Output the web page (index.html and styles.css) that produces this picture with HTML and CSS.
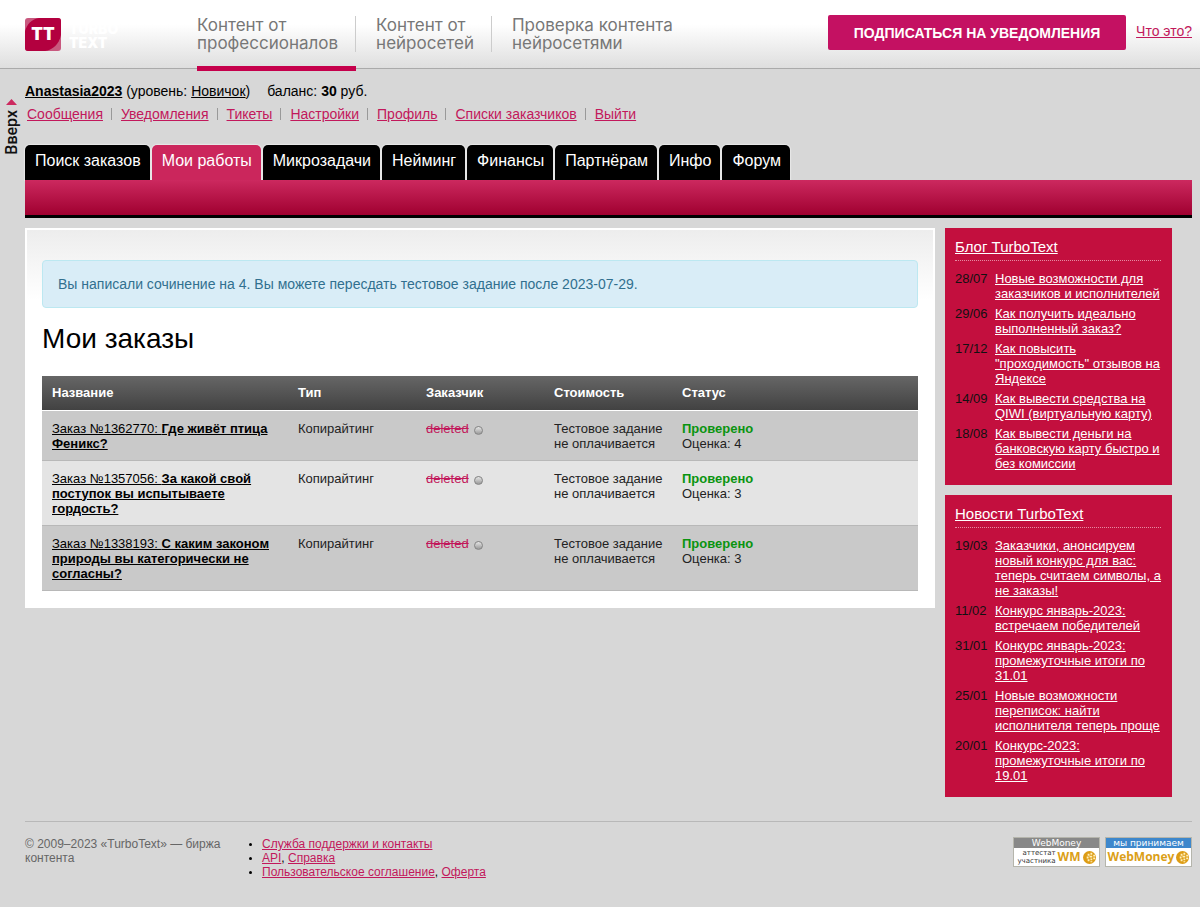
FILE: index.html
```html
<!DOCTYPE html>
<html lang="ru">
<head>
<meta charset="utf-8">
<meta name="viewport" content="width=device-width, initial-scale=1">
<title>Мои заказы — TurboText</title>
<link rel="stylesheet" href="styles.css">
</head>
<body>
<header class="top">
  <a class="logo" href="#" aria-label="TurboText">
    <span class="logo-mark">
      <svg class="logo-bg" viewBox="0 0 36 33" aria-hidden="true">
        <rect width="36" height="33" rx="3" fill="#c8597f"/>
        <path d="M0 13C2 6 7 1 14 0H33Q36 0 36 3V17C34 26 28 32 20 33H3Q0 33 0 30Z" fill="#b3003f"/>
      </svg>
      <span class="logo-tt">TT</span>
    </span>
    <span class="logo-name"><span>TURBO</span><span>TEXT</span></span>
  </a>
  <nav class="services">
    <a class="service service-active" href="#"><span>Контент от<br>профессионалов</span></a>
    <a class="service" href="#"><span>Контент от<br>нейросетей</span></a>
    <a class="service" href="#"><span>Проверка контента<br>нейросетями</span></a>
  </nav>
  <div class="subscribe">
    <button class="subscribe-button" type="button">ПОДПИСАТЬСЯ НА УВЕДОМЛЕНИЯ</button>
    <a class="link" href="#">Что это?</a>
  </div>
</header>

<div class="page">
  <a class="up" href="#"><svg width="11" height="6" viewBox="0 0 11 6" aria-hidden="true"><path d="M5.5 0L11 6H0Z" fill="#cc295f"/></svg><span>Вверх</span></a>
  <div class="body">
    <div class="account"><a class="user" href="#">Anastasia2023</a> (уровень: <a href="#">Новичок</a>)<span class="balance">баланс: <b>30</b> руб.</span></div>
    <ul class="usermenu">
      <li><a class="link" href="#">Сообщения</a></li>
      <li><a class="link" href="#">Уведомления</a></li>
      <li><a class="link" href="#">Тикеты</a></li>
      <li><a class="link" href="#">Настройки</a></li>
      <li><a class="link" href="#">Профиль</a></li>
      <li><a class="link" href="#">Списки заказчиков</a></li>
      <li><a class="link" href="#">Выйти</a></li>
    </ul>
    <nav class="tabs">
      <a href="#">Поиск заказов</a>
      <a class="tab-active" href="#">Мои работы</a>
      <a href="#">Микрозадачи</a>
      <a href="#">Нейминг</a>
      <a href="#">Финансы</a>
      <a href="#">Партнёрам</a>
      <a href="#">Инфо</a>
      <a href="#">Форум</a>
    </nav>
    <div class="bar"></div>

    <div class="columns">
      <main class="panel">
        <div class="notice">Вы написали сочинение на 4. Вы можете пересдать тестовое задание после 2023-07-29.</div>
        <h1>Мои заказы</h1>
        <table class="orders">
          <colgroup><col class="col-name"><col class="col-mid"><col class="col-mid"><col class="col-mid"><col></colgroup>
          <thead>
            <tr><th>Название</th><th>Тип</th><th>Заказчик</th><th>Стоимость</th><th>Статус</th></tr>
          </thead>
          <tbody>
            <tr>
              <td><a href="#">Заказ №1362770: <b>Где живёт птица Феникс?</b></a></td>
              <td>Копирайтинг</td>
              <td><del>deleted</del><span class="dot"></span></td>
              <td>Тестовое задание не оплачивается</td>
              <td><b class="ok">Проверено</b><br>Оценка: 4</td>
            </tr>
            <tr>
              <td><a href="#">Заказ №1357056: <b>За какой свой поступок вы испытываете гордость?</b></a></td>
              <td>Копирайтинг</td>
              <td><del>deleted</del><span class="dot"></span></td>
              <td>Тестовое задание не оплачивается</td>
              <td><b class="ok">Проверено</b><br>Оценка: 3</td>
            </tr>
            <tr>
              <td><a href="#">Заказ №1338193: <b>С каким законом природы вы категорически не согласны?</b></a></td>
              <td>Копирайтинг</td>
              <td><del>deleted</del><span class="dot"></span></td>
              <td>Тестовое задание не оплачивается</td>
              <td><b class="ok">Проверено</b><br>Оценка: 3</td>
            </tr>
          </tbody>
        </table>
      </main>

      <aside class="side">
        <section class="feed">
          <h2><a href="#">Блог TurboText</a></h2>
          <ul>
            <li><time>28/07</time><a href="#">Новые возможности для заказчиков и исполнителей</a></li>
            <li><time>29/06</time><a href="#">Как получить идеально выполненный заказ?</a></li>
            <li><time>17/12</time><a href="#">Как повысить "проходимость" отзывов на Яндексе</a></li>
            <li><time>14/09</time><a href="#">Как вывести средства на QIWI (виртуальную карту)</a></li>
            <li><time>18/08</time><a href="#">Как вывести деньги на банковскую карту быстро и без комиссии</a></li>
          </ul>
        </section>
        <section class="feed">
          <h2><a href="#">Новости TurboText</a></h2>
          <ul>
            <li><time>19/03</time><a href="#">Заказчики, анонсируем новый конкурс для вас: теперь считаем символы, а не заказы!</a></li>
            <li><time>11/02</time><a href="#">Конкурс январь-2023: встречаем победителей</a></li>
            <li><time>31/01</time><a href="#">Конкурс январь-2023: промежуточные итоги по 31.01</a></li>
            <li><time>25/01</time><a href="#">Новые возможности переписок: найти исполнителя теперь проще</a></li>
            <li><time>20/01</time><a href="#">Конкурс-2023: промежуточные итоги по 19.01</a></li>
          </ul>
        </section>
      </aside>
    </div>

    <footer class="footer">
      <div class="copyright">© 2009–2023 «TurboText» — биржа контента</div>
      <ul class="footer-links">
        <li><a class="link" href="#">Служба поддержки и контакты</a></li>
        <li><a class="link" href="#">API</a>, <a class="link" href="#">Справка</a></li>
        <li><a class="link" href="#">Пользовательское соглашение</a>, <a class="link" href="#">Оферта</a></li>
      </ul>
      <div class="badges">
        <a class="badge" href="#">
          <span class="badge-head">WebMoney</span>
          <span class="badge-body"><span class="badge-note">аттестат<br>участника</span><span class="badge-wm">WM</span>
            <svg class="globe" viewBox="0 0 14 14" aria-hidden="true"><circle cx="7" cy="7" r="7" fill="#dd9c14"/><path d="M5 3h2v2H5zM8 2h2v2H8zM11 4h2v2h-2zM4 6h2v2H4zM7 5h3v2H7zM11 7h2v2h-2zM5 9h2v2H5zM8 8h2v2H8zM8 11h2v1H8z" fill="#fff0bd"/></svg>
          </span>
        </a>
        <a class="badge badge-blue" href="#">
          <span class="badge-head">мы принимаем</span>
          <span class="badge-body"><span class="badge-wm">WebMoney</span>
            <svg class="globe" viewBox="0 0 14 14" aria-hidden="true"><circle cx="7" cy="7" r="7" fill="#dd9c14"/><path d="M5 3h2v2H5zM8 2h2v2H8zM11 4h2v2h-2zM4 6h2v2H4zM7 5h3v2H7zM11 7h2v2h-2zM5 9h2v2H5zM8 8h2v2H8zM8 11h2v1H8z" fill="#fff0bd"/></svg>
          </span>
        </a>
      </div>
    </footer>
  </div>
</div>
</body>
</html>
```
FILE: styles.css
```css
* { box-sizing: border-box; }
body {
  margin: 0;
  background: #d7d7d7;
  color: #000;
  font-family: "Liberation Sans", Arial, sans-serif;
  font-size: 14px;
  line-height: 16px;
}
ul { list-style: none; margin: 0; padding: 0; }
a { color: inherit; }
.link { color: #c2185b; }

.top {
  display: flex;
  height: 69px;
  padding: 0 8px 0 25px;
  background: linear-gradient(#fff 36%, #dedede);
  border-bottom: 1px solid #aaa;
}
.logo {
  display: flex;
  gap: 8px;
  width: 172px;
  padding-top: 18px;
  text-decoration: none;
  color: #fff;
  font-family: Inter, sans-serif;
  font-weight: 900;
}
.logo-mark { display: grid; width: 36px; height: 33px; }
.logo-bg { grid-area: 1 / 1; width: 36px; height: 33px; }
.logo-tt { grid-area: 1 / 1; place-self: center; z-index: 1; font-size: 17px; line-height: 33px; }
.logo-name { display: flex; flex-direction: column; padding-top: 4px; font-size: 14px; line-height: 14px; }

.services { display: flex; }
.service {
  display: flex;
  height: 71px;
  padding: 16px 0 0 20px;
  color: #777;
  font-family: Inter, sans-serif;
  font-size: 17px;
  line-height: 18px;
  text-decoration: none;
}
.service span { height: 36px; padding-right: 17px; border-right: 1px solid #ccc; }
.service:last-child span { border-right: 0; }
.service-active { padding-left: 0; border-bottom: 5px solid #c5004b; }

.subscribe { display: flex; gap: 10px; margin-left: auto; padding-top: 15px; }
.subscribe-button {
  width: 298px;
  height: 35px;
  padding: 0;
  border: 0;
  border-radius: 2px;
  background: #c41162;
  color: #fff;
  font-family: inherit;
  font-size: 14px;
  font-weight: bold;
}
.subscribe .link { padding-top: 8px; }

.page { display: grid; grid-template-columns: 25px minmax(0, 1fr); padding-right: 8px; }
.up {
  display: flex;
  flex-direction: column;
  align-items: center;
  gap: 5px;
  padding: 30px 2px 0 0;
  align-self: start;
  color: #111;
  font-family: Roboto, sans-serif;
  font-size: 16px;
  font-weight: 500;
  text-decoration: none;
}
.up span { writing-mode: vertical-rl; transform: rotate(180deg); }

.account { padding-top: 14px; }
.user { font-weight: bold; }
.balance { margin-left: 17px; }
.usermenu { display: flex; padding: 7px 0 0 2px; }
.usermenu li { display: flex; align-items: center; }
.usermenu li + li::before { content: ""; width: 1px; height: 12px; margin: 0 9px 0 8px; background: #999; }

.tabs { display: flex; gap: 2px; margin-top: 23px; }
.tabs a {
  height: 35px;
  padding: 0 9px 0 10px;
  border-radius: 5px 5px 0 0;
  background: #000;
  color: #fff;
  font-size: 16px;
  line-height: 31px;
  text-decoration: none;
  box-shadow: 0 0 1px 1px #e8e8e8;
}
.tabs .tab-active { background: #cb265c; }
.bar {
  position: relative;
  height: 38px;
  background: linear-gradient(#cc295f, #a00030);
  border-bottom: 3px solid #000;
}

.columns { display: flex; align-items: flex-start; gap: 10px; padding: 10px 20px 0 0; }
.panel {
  flex: 1;
  min-width: 0;
  padding: 30px 15px 15px;
  border: 2px solid #fff;
  background: #fff linear-gradient(#ededed, #fff) 0 0 / 100% 70px no-repeat;
}
.notice {
  padding: 15px;
  border: 1px solid #bce8f1;
  border-radius: 4px;
  background: #d9edf7;
  color: #31708f;
}
h1 { margin: 16px 0 22px; font-size: 28px; font-weight: normal; line-height: 30px; }
.orders {
  width: 100%;
  border-collapse: collapse;
  table-layout: fixed;
  color: #222;
  font-size: 13px;
  line-height: 15px;
}
.col-name { width: 246px; }
.col-mid { width: 128px; }
.orders th {
  height: 34px;
  padding: 0 10px;
  border-bottom: 1px solid #fff;
  color: #fff;
  text-align: left;
}
.orders thead tr { background: linear-gradient(#666, #424242); }
.orders td { padding: 10px 8px 9px 10px; border-bottom: 1px solid #b8b8b8; vertical-align: top; }
.orders tbody tr { background: #c9c9c9; }
.orders tbody tr:nth-child(even) { background: #e4e4e4; }
.orders td a { color: #000; }
.orders del { color: #c2185b; }
.ok { color: #0a9410; }
.dot {
  display: inline-block;
  width: 9px;
  height: 9px;
  margin-left: 5px;
  border: 1px solid #858585;
  border-radius: 50%;
  background: linear-gradient(#e6e6e6, #999);
  vertical-align: -2px;
}

.side { width: 227px; }
.feed {
  padding: 10px 11px 9px 10px;
  margin-bottom: 10px;
  background: #c30f3e;
  color: #fff;
}
.feed h2 {
  margin: 0 0 10px;
  padding-bottom: 4px;
  border-bottom: 1px dotted #e58ba2;
  font-size: 15px;
  font-weight: normal;
  line-height: 18px;
}
.feed li { display: flex; padding-bottom: 5px; font-size: 13px; line-height: 15px; }
.feed time { flex: 0 0 40px; color: #111; }

.footer {
  display: flex;
  align-items: flex-start;
  margin-top: 14px;
  padding: 15px 0 28px;
  border-top: 1px solid #b8b8b8;
  font-size: 12px;
  line-height: 14px;
}
.copyright { width: 237px; padding-right: 40px; color: #666; }
.footer-links { list-style: disc; }
.footer-links li::marker { font-size: 10px; }
.badges { display: flex; gap: 5px; margin-left: auto; }
.badge {
  display: flex;
  flex-direction: column;
  width: 87px;
  height: 30px;
  border: 1px solid #b5b5ac;
  background: #fff;
  color: #333;
  font-family: "DejaVu Sans", sans-serif;
  text-decoration: none;
}
.badge-head { background: #888; color: #fff; font-size: 9px; line-height: 10px; text-align: center; }
.badge-blue .badge-head { background: #3d87cc; }
.badge-body { display: flex; flex: 1; align-items: center; justify-content: center; gap: 2px; }
.badge-note { font-size: 7px; line-height: 8px; text-align: right; }
.badge-wm { color: #dba018; font-family: "Open Sans", sans-serif; font-size: 12px; font-weight: bold; }
.globe { flex: none; width: 13px; height: 13px; }
```
